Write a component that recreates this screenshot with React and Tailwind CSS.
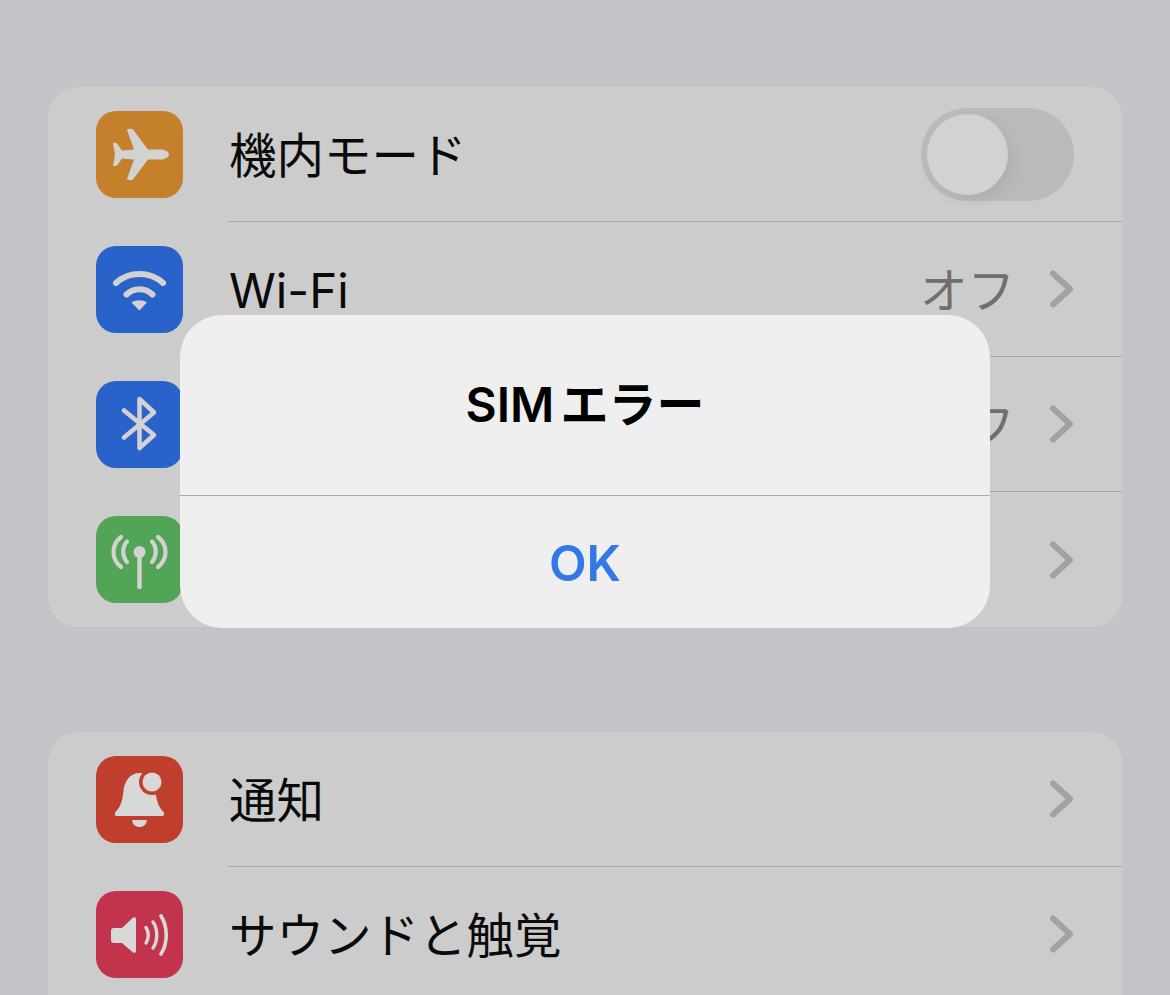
function Plane() {
  return (
    <svg viewBox="0 0 87 87" className="w-full h-full">
      <path fill="#d2d2d2" d="M73 43.5C73 46 69 48.5 65 48.5L52 48.5L37 68.5C36 69.5 31.5 69.5 31 68L38 48.5L26 47.5L21.5 54C20.5 55.5 17 55.5 17 54.5L19 43.5L17 32.5C17 31.5 20.5 31.5 21.5 33L26 39.5L38 38.5L31 19C31.5 17.5 36 17.5 37 18.5L52 38.5L65 38.5C69 38.5 73 41 73 43.5Z" />
    </svg>
  );
}
function Wifi() {
  return (
    <svg viewBox="0 0 87 87" className="w-full h-full" fill="none" stroke="#d2d2d2" strokeLinecap="round">
      <path strokeWidth="6" d="M20 37C33 25 54 25 67 37" />
      <path strokeWidth="6" d="M30.5 48.5C38 41.5 49 41.5 56.5 48.5" />
      <path fill="#d2d2d2" stroke="none" d="M35.5 56.5C40 53.5 47 53.5 51 56.5L43.3 64.5Z" />
    </svg>
  );
}
function Bluetooth() {
  return (
    <svg viewBox="0 0 87 87" className="w-full h-full" fill="none" stroke="#d2d2d2" strokeWidth="4.5" strokeLinecap="round" strokeLinejoin="round">
      <path d="M28 29.5L58 54L43.5 67V18L58 31.5L28 56.5" />
    </svg>
  );
}
function Antenna() {
  return (
    <svg viewBox="0 0 87 87" className="w-full h-full" fill="none" stroke="#d2d2d2" strokeWidth="4.2" strokeLinecap="round">
      <circle cx="43.5" cy="36" r="6" fill="#d2d2d2" stroke="none" />
      <path strokeWidth="4.5" d="M43.5 38V71" />
      <path d="M31 25.5C26 31 26 40 31 46" />
      <path d="M56 25.5C61 31 61 40 56 46" />
      <path d="M25 21C15 29 15 43 25 51" />
      <path d="M62 21C72 29 72 43 62 51" />
    </svg>
  );
}
function Bell() {
  return (
    <svg viewBox="0 0 87 87" className="w-full h-full">
      <path fill="#d8d8d8" d="M43.5 17C34 17 28.5 25 27.5 35C26.5 45 24.5 51 19.5 56C18 58 19 60 21 60L66 60C68 60 69 58 67.5 56C62.5 51 60.5 45 59.5 35C58.5 25 53 17 43.5 17Z" />
      <path fill="#d8d8d8" d="M36 64H51C50.5 68.5 47.5 71 43.5 71C39.5 71 36.5 68.5 36 64Z" />
      <circle cx="56" cy="26" r="13" fill="#c03f2c" />
      <circle cx="56" cy="26" r="9.5" fill="#d8d8d8" />
    </svg>
  );
}
function Speaker() {
  return (
    <svg viewBox="0 0 87 87" className="w-full h-full" fill="none" stroke="#d8d8d8" strokeLinecap="round">
      <path fill="#d8d8d8" stroke="none" d="M18 37H26L36.5 27C38 25.5 40 26 40 28V60C40 62 38 62.5 36.5 61L26 52H18C16 52 15 51 15 49V40C15 38 16 37 18 37Z" />
      <path strokeWidth="3.4" d="M50 36.5C53 41 53 47.5 50 52" />
      <path strokeWidth="3.4" d="M57 31C62 38 62 50 57 57" />
      <path strokeWidth="3.6" d="M65 25C72 36 72 52 65 63" />
    </svg>
  );
}
function Chevron() {
  return (
    <svg viewBox="0 0 24 38" className="w-[24px] h-[38px] ml-[35px]" fill="none" stroke="#a2a2a2" strokeWidth="6" strokeLinecap="round" strokeLinejoin="round">
      <path d="M3 3.5L20 19L3 34.5" />
    </svg>
  );
}
function Toggle() {
  return (
    <div className="w-[153px] h-[93px] rounded-full bg-[#bababa] flex items-center pl-[6px]">
      <div className="w-[81px] h-[81px] rounded-full bg-[#d2d2d2] shadow-[6px_6px_14px_rgba(0,0,0,0.06)]" />
    </div>
  );
}

function Row({ color, icon, label, value, toggle, last }) {
  return (
    <div className="h-[135px] flex items-center pl-[48px]">
      <div className={`w-[87px] h-[87px] rounded-[20px] shrink-0 ${color}`}>{icon}</div>
      <div className={`ml-[45px] flex-1 h-full flex items-center justify-between pr-[48px] ${last ? "" : "border-b border-[#a6a6a6]"}`}>
        <span className="text-[47.5px] leading-none text-[#0a0a0a] mt-[4px] ml-[1px]">{label}</span>
        {toggle ? (
          <Toggle />
        ) : (
          <div className="flex items-center">
            {value && <span className="text-[47.5px] leading-none text-[#6f6f6f] mt-[4px]">{value}</span>}
            <Chevron />
          </div>
        )}
      </div>
    </div>
  );
}

export default function App() {
  return (
    <div className="relative h-[995px] w-[1170px] overflow-hidden bg-[#c3c3c8] pt-[87px] px-[48px] flex flex-col gap-[105px] font-['Inter','Noto_Sans_CJK_JP',sans-serif]">
      <div className="rounded-[30px] bg-[#cccccc] shrink-0">
        <Row color="bg-[#c5802c]" icon={<Plane />} label="機内モード" toggle />
        <Row color="bg-[#2962c9]" icon={<Wifi />} label="Wi-Fi" value="オフ" />
        <Row color="bg-[#2962c9]" icon={<Bluetooth />} label="Bluetooth" value="オフ" />
        <Row color="bg-[#52a456]" icon={<Antenna />} label="モバイル通信" last />
      </div>
      <div className="rounded-[30px] bg-[#cccccc] shrink-0">
        <Row color="bg-[#c03f2c]" icon={<Bell />} label="通知" />
        <Row color="bg-[#c2344d]" icon={<Speaker />} label="サウンドと触覚" />
        <Row color="bg-[#2962c9]" label="" />
      </div>
      <div className="absolute left-[180px] top-[315px] w-[810px] h-[313px] rounded-[42px] bg-[#efeff0] flex flex-col">
        <div className="h-[181px] border-b border-[#ababab] flex items-center justify-center">
          <span className="text-[48px] leading-none font-semibold text-black flex items-center gap-[6px]">
            <span>SIM</span>
            <span>エラー</span>
          </span>
        </div>
        <div className="flex-1 pt-[3px] flex items-center justify-center">
          <span className="text-[49px] leading-none font-semibold text-[#3478e8]">OK</span>
        </div>
      </div>
    </div>
  );
}
